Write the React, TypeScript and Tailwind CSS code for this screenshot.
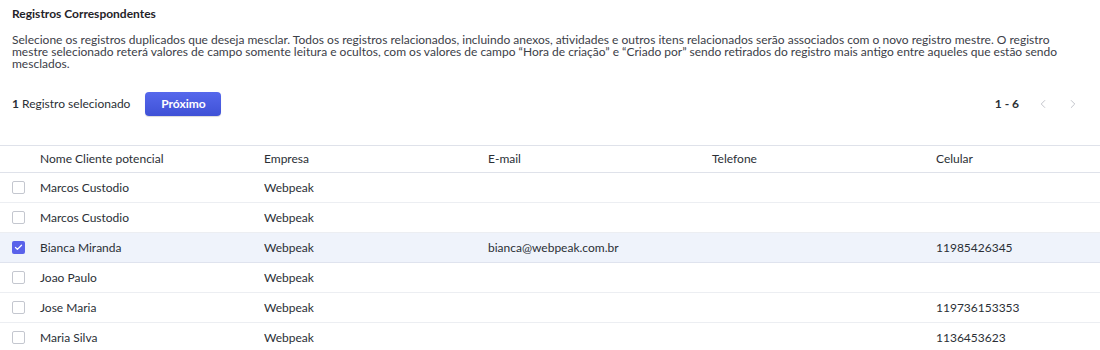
import { ChevronLeft, ChevronRight, Check } from 'lucide-react';

type Row = {
  name: string;
  company: string;
  email: string;
  phone: string;
  mobile: string;
  checked?: boolean;
};

const ROWS: Row[] = [
  { name: 'Marcos Custodio', company: 'Webpeak', email: '', phone: '', mobile: '' },
  { name: 'Marcos Custodio', company: 'Webpeak', email: '', phone: '', mobile: '' },
  {
    name: 'Bianca Miranda',
    company: 'Webpeak',
    email: 'bianca@webpeak.com.br',
    phone: '',
    mobile: '11985426345',
    checked: true,
  },
  { name: 'Joao Paulo', company: 'Webpeak', email: '', phone: '', mobile: '' },
  { name: 'Jose Maria', company: 'Webpeak', email: '', phone: '', mobile: '119736153353' },
  { name: 'Maria Silva', company: 'Webpeak', email: '', phone: '', mobile: '1136453623' },
];

const COLUMNS = ['Nome Cliente potencial', 'Empresa', 'E-mail', 'Telefone', 'Celular'];

function Checkbox({ checked }: { checked?: boolean }) {
  if (checked) {
    return (
      <span className="flex h-[13px] w-[13px] items-center justify-center rounded-[2px] bg-[#5a62ea]">
        <Check className="h-[9px] w-[9px] text-white" strokeWidth={3.5} />
      </span>
    );
  }
  return <span className="block h-[13px] w-[13px] rounded-[2px] border border-[#c4c7cf] bg-white" />;
}

export default function App() {
  return (
    <div className="h-[350px] w-[1100px] overflow-hidden bg-white font-['Lato',sans-serif] text-[12px] text-[#2b2f36]">
      <div className="px-3 pt-[6px]">
        <h2 className="text-[12px] font-bold leading-[16px] text-[#1f2329]">Registros Correspondentes</h2>
        <p className="mt-[12px] max-w-[1060px] leading-[12px] text-[#3c4048]">
          Selecione os registros duplicados que deseja mesclar. Todos os registros relacionados, incluindo anexos,
          atividades e outros itens relacionados serão associados com o novo registro mestre. O registro mestre
          selecionado reterá valores de campo somente leitura e ocultos, com os valores de campo “Hora de criação” e
          “Criado por” sendo retirados do registro mais antigo entre aqueles que estão sendo mesclados.
        </p>
      </div>

      <div className="mt-[22px] flex h-[24px] items-center pl-3 pr-[20px]">
        <span>
          <span className="font-bold">1</span> Registro selecionado
        </span>
        <button
          type="button"
          className="ml-[15px] h-[24px] w-[76px] rounded-[4px] bg-gradient-to-b from-[#5668ec] to-[#3f51d6] font-bold text-white shadow-[0_1px_1px_rgba(0,0,0,0.15)]"
        >
          Próximo
        </button>
        <div className="ml-auto flex items-center">
          <span className="font-bold">1 - 6</span>
          <ChevronLeft className="ml-[17px] h-[14px] w-[14px] text-[#b9bcc4]" strokeWidth={1.5} />
          <ChevronRight className="ml-[16px] h-[14px] w-[14px] text-[#b9bcc4]" strokeWidth={1.5} />
        </div>
      </div>

      <div className="mt-[29px]">
        <div className="flex h-[28px] items-center border-y border-[#dfe2ea]">
          <div className="w-[40px] shrink-0" />
          {COLUMNS.map((c) => (
            <div key={c} className="w-[224px] shrink-0">
              {c}
            </div>
          ))}
        </div>
        {ROWS.map((r, i) => (
          <div
            key={i}
            className={`flex h-[30px] items-center border-b ${
              r.checked ? 'border-[#dfe3ee] bg-[#eff3fb]' : 'border-[#eceef2]'
            }`}
          >
            <div className="flex w-[40px] shrink-0 pl-3">
              <Checkbox checked={r.checked} />
            </div>
            <div className="w-[224px] shrink-0">{r.name}</div>
            <div className="w-[224px] shrink-0">{r.company}</div>
            <div className="w-[224px] shrink-0">{r.email}</div>
            <div className="w-[224px] shrink-0">{r.phone}</div>
            <div className="w-[224px] shrink-0">{r.mobile}</div>
          </div>
        ))}
      </div>
    </div>
  );
}
